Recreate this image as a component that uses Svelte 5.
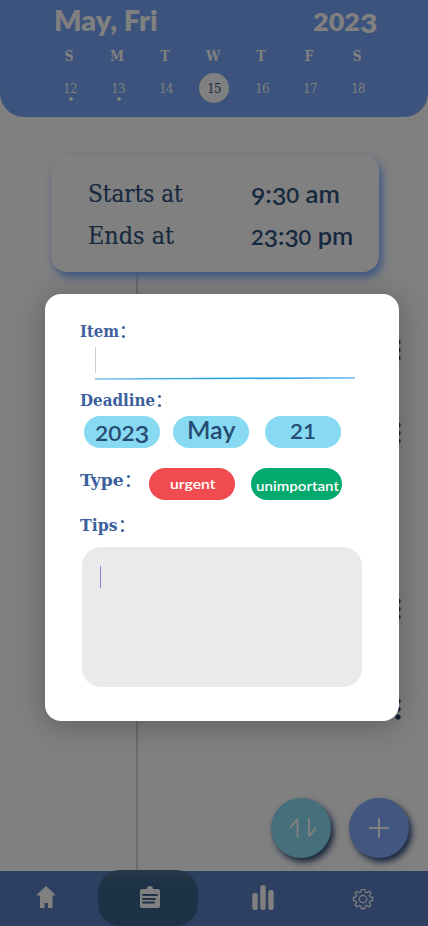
<script>
  const days = [
    { name: 'S', date: '12', dot: true },
    { name: 'M', date: '13', dot: true },
    { name: 'T', date: '14' },
    { name: 'W', date: '15', active: true },
    { name: 'T', date: '16' },
    { name: 'F', date: '17' },
    { name: 'S', date: '18' }
  ];
  const menus = [349.5, 432.5, 608.5, 708.5];

  // Stretches a label horizontally so that it occupies the given width.
  function fit(node, width) {
    const natural = node.offsetWidth;
    node.style.transform = `scaleX(${width / natural})`;
    node.style.marginRight = `${width - natural}px`;
  }

  const figure = (c) => ('012'.includes(c) ? 'short' : '34579'.includes(c) ? 'low' : '');
</script>

{#snippet oldstyle(text, width)}
  <span class="fit sans" use:fit={width}>{#each text.split('') as c}{#if figure(c)}<span class={figure(c)}>{c}</span>{:else}{c}{/if}{/each}</span>
{/snippet}

{#snippet label(text, width)}
  <div class="label"><span class="fit" use:fit={width}>{text}</span><i class="colon"></i></div>
{/snippet}

<div class="screen">
  <header>
    <div class="title">
      {@render oldstyle('May, Fri', 104)}
      {@render oldstyle('2023', 65)}
    </div>
    <div class="week">
      {#each days as d}
        <div class="day">
          <b>{d.name}</b>
          <span class="date" class:active={d.active}>{d.date}{#if d.dot}<i></i>{/if}</span>
        </div>
      {/each}
    </div>
  </header>

  <main>
    <div class="line"></div>
    <section class="card">
      <div class="row"><span class="cell"><span class="fit" use:fit={95}>Starts at</span></span>{@render oldstyle('9:30 am', 89)}</div>
      <div class="row"><span class="cell"><span class="fit" use:fit={86}>Ends at</span></span>{@render oldstyle('23:30 pm', 102)}</div>
    </section>
  </main>

  <nav>
    <svg width="18" height="22" viewBox="0 0 18 22" class="home"><path d="M9 0 18 8.500V9.500H15.500V22H11V17H7.500V22H3V9.500H0V8.500Z" fill="#808080" /></svg>
    <div class="tab">
      <svg width="20" height="22" viewBox="0 0 20 22"><path d="M2 3H7A3 3 0 0 1 13 3H18Q20 3 20 5V20Q20 22 18 22H2Q0 22 0 20V5Q0 3 2 3Z" fill="#808080" /><path d="M3 9H17M3 13H15M3 16.500H14" stroke="#1d3147" stroke-width="1.800" stroke-linecap="round" /></svg>
    </div>
    <svg width="22" height="25" viewBox="0 0 22 25" class="bars" fill="#808080"><rect x="0.300" y="8" width="5.400" height="17" rx="2" /><rect x="8.300" y="0" width="5.400" height="25" rx="2.500" /><rect x="16.300" y="5" width="5.400" height="20" rx="2" /></svg>
    <svg width="22" height="22" viewBox="0 0 22 22" class="gear" fill="none" stroke="#808080" stroke-width="1.200"><circle cx="11" cy="11" r="3.700" /><path stroke-linejoin="round" d="M9.300 1.500H12.700L13.200 4L14.800 4.700L17 3.200L19 5.200L17.400 7.300L18 8.900L20.600 9.300V12.700L18 13.200L17.400 14.800L19 17L17 19L14.800 17.500L13.200 18.100L12.700 20.600H9.300L8.800 18.100L7.200 17.500L5 19L3 17L4.600 14.800L4 13.200L1.400 12.700V9.300L4 8.900L4.600 7.300L3 5.200L5 3.200L7.200 4.700L8.800 4Z" /></svg>
  </nav>

  {#each menus as y}
    <svg class="menu" style:top="{y - 11}px" width="6" height="22" viewBox="0 0 6 22" fill="#152138"><circle cx="3" cy="3" r="2.600" /><circle cx="3" cy="11" r="2.600" /><circle cx="3" cy="19" r="2.600" /></svg>
  {/each}

  <div class="fabs">
    <button class="sort" aria-label="Sort"><svg width="28" height="22" viewBox="0 0 28 22" fill="none" stroke="#808080" stroke-width="1.900"><path d="M1.500 10.500 8.500 2V20.500M20 1V19.500L27 10.500" stroke-linejoin="bevel" /></svg></button>
    <button class="add" aria-label="Add"><svg width="20" height="20" viewBox="0 0 20 20" stroke="#808080" stroke-width="2"><path d="M1 10H19M10 1V19" stroke-linecap="round" /></svg></button>
  </div>

  <div class="modal">
    {@render label('Item', 39)}
    <div class="input"><i class="caret"></i></div>
    <svg class="rule" width="260" height="4" viewBox="0 0 260 4"><path d="M0 1.300 260 0V1.700L0 2.800Z" fill="url(#ink)" /><defs><linearGradient id="ink" gradientUnits="userSpaceOnUse" x1="0" y1="0" x2="260" y2="0"><stop offset="0" stop-color="#7cc4ee" /><stop offset=".45" stop-color="#2a9fe0" /><stop offset=".6" stop-color="#2a9fe0" /><stop offset="1" stop-color="#7cc4ee" /></linearGradient></defs></svg>
    {@render label('Deadline', 75)}
    <div class="chips">
      <span class="chip year">{@render oldstyle('2023', 54)}</span>
      <span class="chip">{@render oldstyle('May', 48)}</span>
      <span class="chip dom">{@render oldstyle('21', 26)}</span>
    </div>
    <div class="types">
      {@render label('Type', 44)}
      <span class="pill urgent">{@render oldstyle('urgent', 45)}</span>
      <span class="pill minor">{@render oldstyle('unimportant', 83)}</span>
    </div>
    {@render label('Tips', 38)}
    <div class="tips"><i></i></div>
  </div>
</div>

<style>
  .screen { position: relative; display: flex; flex-direction: column; width: 428px; height: 926px; overflow: hidden; background: #808080; font-family: "DejaVu Serif Condensed", "DejaVu Serif", serif; font-stretch: condensed; }
  .fit { display: inline-block; flex: none; transform-origin: 0 50%; white-space: pre; }
  .sans { font-family: Lato, "Open Sans", sans-serif; }
  .short { font-size: .86em; }
  .low { font-size: .96em; vertical-align: -.09em; line-height: 0; }

  header { box-sizing: border-box; height: 117px; flex: none; background: #3c537d; border-radius: 0 0 24px 24px; color: #808080; }
  .title { display: flex; justify-content: space-between; padding: 4px 51px 0 54px; height: 32px; font-size: 28px; line-height: 32px; font-weight: 800; }
  .week { display: flex; padding: 10px 46px 0 46px; }
  .day { flex: 1; display: flex; flex-direction: column; align-items: center; }
  .day b { font-size: 14px; line-height: 20px; height: 20px; margin-left: -2px; }
  .date { position: relative; box-sizing: border-box; width: 30px; height: 30px; margin-top: 7px; border-radius: 50%; text-align: center; font-size: 13px; line-height: 31px; letter-spacing: -.8px; }
  .active { background: #808080; color: #16293f; }
  .date i { position: absolute; left: 14px; top: 24px; width: 4px; height: 4px; border-radius: 50%; background: #808080; }

  main { position: relative; flex: 1; padding: 38px 49px 0 51px; }
  .line { position: absolute; left: 136px; top: 155px; bottom: 0; width: 2px; background: #6b6b6b; }
  .card { position: relative; box-sizing: border-box; height: 117px; padding: 18px 0 0 37px; border-radius: 16px; background: #808080; box-shadow: 3px 5px 9px #3c5584; font-size: 24px; color: #16293f; }
  .row { display: flex; height: 42px; line-height: 42px; }
  .cell { width: 163px; flex: none; -webkit-text-stroke: .15px currentColor; }
  .row .sans { font-weight: 600; }

  nav { position: relative; display: flex; align-items: flex-start; height: 55px; flex: none; background: #2e4062; }
  .home { margin: 15px 0 0 37px; }
  .tab { box-sizing: border-box; width: 100px; height: 56px; margin: -1px 0 0 43px; padding: 16px 0 0 42px; border-radius: 22px; background: linear-gradient(#283a49, #1d3147 14px); }
  .bars { margin: 14px 0 0 54px; }
  .gear { margin: 17px 0 0 78px; }

  .menu { position: absolute; left: 395px; }
  .fabs { position: absolute; left: 271px; top: 798px; display: flex; gap: 18px; }
  button { box-sizing: border-box; display: flex; align-items: center; justify-content: center; width: 60px; height: 60px; padding: 0; border: 0; border-radius: 50%; box-shadow: 3px 4px 6px #17243c; }
  .sort { background: #456f7b; padding-left: 4px; }
  .add { background: #42577f; }

  .modal { position: absolute; left: 45px; top: 294px; box-sizing: border-box; width: 354px; height: 427px; padding: 24px 35px 0; border-radius: 16px; background: #fff; box-shadow: 0 4px 30px rgba(0, 0, 0, .27); }
  .label { display: flex; height: 26px; line-height: 26px; font-size: 17px; font-weight: 700; color: #3c5f9d; }
  .colon { width: 3px; height: 3px; margin: 8px 0 0 3px; border-radius: 1.5px; background: currentColor; box-shadow: 0 9px currentColor; }
  .input { height: 33px; padding: 3px 0 0 15px; box-sizing: border-box; }
  .caret { display: block; width: 1px; height: 26px; background: #ccc; }
  .rule { display: block; margin: 0 0 6px 15px; }
  .chips { display: flex; margin: 3px 0 0 4px; }
  .chip { box-sizing: border-box; width: 76px; height: 32px; margin-right: 13px; border-radius: 16px; background: #87daf2; color: #264c73; font-size: 24px; line-height: 28px; font-weight: 600; display: flex; justify-content: center; }
  .year { line-height: 32px; }
  .dom { margin-left: 3px; }
  .types { display: flex; margin: 20px 0 12px; height: 32px; }
  .types :global(.label) { width: 69px; line-height: 24px; }
  .types :global(.colon) { margin-top: 7px; }
  .pill { box-sizing: border-box; height: 32px; padding-left: 1px; border-radius: 16px; color: #fff; font-size: 14px; font-weight: 600; display: flex; justify-content: center; }
  .urgent { width: 86px; background: #f04c4f; line-height: 31px; }
  .minor { width: 91px; margin-left: 16px; background: #04a96d; line-height: 36px; }
  .tips { height: 140px; margin: 9px 2px 0; border-radius: 19px; background: #eaeaea; padding: 19px 0 0 18px; box-sizing: border-box; }
  .tips i { display: block; width: 1px; height: 22px; background: #8a86dd; }
</style>
